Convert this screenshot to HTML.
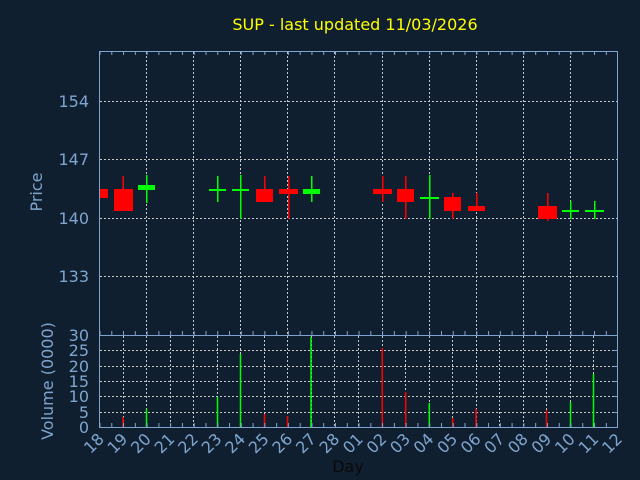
<!DOCTYPE html>
<html><head><meta charset="utf-8"><style>
html,body{margin:0;padding:0;background:#101f30;width:640px;height:480px;overflow:hidden;}
svg{display:block;}
text{font-family:"DejaVu Sans","Liberation Sans",sans-serif;}
</style></head><body>
<svg width="640" height="480" viewBox="0 0 640 480" xmlns="http://www.w3.org/2000/svg">
<defs>
<pattern id="tkT" x="99.5" y="0" width="11.775" height="480" patternUnits="userSpaceOnUse"><line x1="0.5" y1="51" x2="0.5" y2="55" stroke="#7fa5cf" stroke-width="1"/></pattern>
<pattern id="tkM" x="99.5" y="0" width="11.775" height="480" patternUnits="userSpaceOnUse"><line x1="0.5" y1="331" x2="0.5" y2="335" stroke="#7fa5cf" stroke-width="1"/></pattern>
<pattern id="tkB" x="99.5" y="0" width="11.775" height="480" patternUnits="userSpaceOnUse"><line x1="0.5" y1="423" x2="0.5" y2="427" stroke="#7fa5cf" stroke-width="1"/></pattern>
</defs>
<rect width="640" height="480" fill="#101f30"/>
<text x="355" y="30" fill="#ffff00" font-size="16" text-anchor="middle">SUP - last updated 11/03/2026</text>

<g stroke="#c8c8c8" stroke-width="1" stroke-dasharray="2,2" fill="none">
<line x1="100" y1="101.5" x2="617" y2="101.5"/>
<line x1="100" y1="159.5" x2="617" y2="159.5"/>
<line x1="100" y1="218.5" x2="617" y2="218.5"/>
<line x1="100" y1="276.5" x2="617" y2="276.5"/>
<line x1="146.5" y1="52" x2="146.5" y2="335"/>
<line x1="193.5" y1="52" x2="193.5" y2="335"/>
<line x1="240.5" y1="52" x2="240.5" y2="335"/>
<line x1="287.5" y1="52" x2="287.5" y2="335"/>
<line x1="334.5" y1="52" x2="334.5" y2="335"/>
<line x1="382.5" y1="52" x2="382.5" y2="335"/>
<line x1="429.5" y1="52" x2="429.5" y2="335"/>
<line x1="476.5" y1="52" x2="476.5" y2="335"/>
<line x1="523.5" y1="52" x2="523.5" y2="335"/>
<line x1="570.5" y1="52" x2="570.5" y2="335"/>
<line x1="100" y1="350.5" x2="617" y2="350.5"/>
<line x1="100" y1="366.5" x2="617" y2="366.5"/>
<line x1="100" y1="381.5" x2="617" y2="381.5"/>
<line x1="100" y1="396.5" x2="617" y2="396.5"/>
<line x1="100" y1="412.5" x2="617" y2="412.5"/>
<line x1="123.5" y1="336" x2="123.5" y2="427"/>
<line x1="146.5" y1="336" x2="146.5" y2="427"/>
<line x1="170.5" y1="336" x2="170.5" y2="427"/>
<line x1="193.5" y1="336" x2="193.5" y2="427"/>
<line x1="217.5" y1="336" x2="217.5" y2="427"/>
<line x1="240.5" y1="336" x2="240.5" y2="427"/>
<line x1="264.5" y1="336" x2="264.5" y2="427"/>
<line x1="287.5" y1="336" x2="287.5" y2="427"/>
<line x1="311.5" y1="336" x2="311.5" y2="427"/>
<line x1="334.5" y1="336" x2="334.5" y2="427"/>
<line x1="358.5" y1="336" x2="358.5" y2="427"/>
<line x1="382.5" y1="336" x2="382.5" y2="427"/>
<line x1="405.5" y1="336" x2="405.5" y2="427"/>
<line x1="429.5" y1="336" x2="429.5" y2="427"/>
<line x1="452.5" y1="336" x2="452.5" y2="427"/>
<line x1="476.5" y1="336" x2="476.5" y2="427"/>
<line x1="499.5" y1="336" x2="499.5" y2="427"/>
<line x1="523.5" y1="336" x2="523.5" y2="427"/>
<line x1="546.5" y1="336" x2="546.5" y2="427"/>
<line x1="570.5" y1="336" x2="570.5" y2="427"/>
<line x1="593.5" y1="336" x2="593.5" y2="427"/>
</g>

<g>
<rect x="100" y="189" width="8" height="9" fill="#ff0000"/>
<rect x="122.5" y="176" width="1.5" height="35" fill="#ff0000"/>
<rect x="114" y="189" width="19" height="22" fill="#ff0000"/>
<rect x="146" y="175" width="1.5" height="28" fill="#00ff00"/>
<rect x="138" y="185" width="17" height="5" fill="#00ff00"/>
<rect x="217" y="176" width="1.5" height="26" fill="#00ff00"/>
<rect x="209" y="189" width="17" height="2" fill="#00ff00"/>
<rect x="240" y="175" width="1.5" height="44" fill="#00ff00"/>
<rect x="232" y="189" width="17" height="2" fill="#00ff00"/>
<rect x="264" y="176" width="1.5" height="26" fill="#ff0000"/>
<rect x="256" y="189" width="17" height="13" fill="#ff0000"/>
<rect x="288" y="176" width="1.5" height="43" fill="#ff0000"/>
<rect x="279" y="189" width="19" height="5" fill="#ff0000"/>
<rect x="311" y="176" width="1.5" height="26" fill="#00ff00"/>
<rect x="303" y="189" width="17" height="5" fill="#00ff00"/>
<rect x="382" y="176" width="1.5" height="26" fill="#ff0000"/>
<rect x="373" y="189" width="19" height="5" fill="#ff0000"/>
<rect x="405" y="176" width="1.5" height="43" fill="#ff0000"/>
<rect x="397" y="189" width="17" height="13" fill="#ff0000"/>
<rect x="429" y="175" width="1.5" height="44" fill="#00ff00"/>
<rect x="420" y="197" width="19" height="2" fill="#00ff00"/>
<rect x="452" y="193" width="1.5" height="26" fill="#ff0000"/>
<rect x="444" y="197" width="17" height="14" fill="#ff0000"/>
<rect x="476" y="193" width="1.5" height="18" fill="#ff0000"/>
<rect x="468" y="206" width="17" height="5" fill="#ff0000"/>
<rect x="547" y="193" width="1.5" height="28" fill="#ff0000"/>
<rect x="538" y="206" width="19" height="13" fill="#ff0000"/>
<rect x="570" y="201" width="1.5" height="18" fill="#00ff00"/>
<rect x="562" y="210" width="17" height="2" fill="#00ff00"/>
<rect x="594" y="201" width="1.5" height="18" fill="#00ff00"/>
<rect x="585" y="210" width="19" height="2" fill="#00ff00"/>
</g>

<g stroke-width="1.5">
<line x1="123" y1="417" x2="123" y2="427" stroke="#ff0000"/>
<line x1="146.5" y1="409" x2="146.5" y2="427" stroke="#00ff00"/>
<line x1="217.5" y1="397" x2="217.5" y2="427" stroke="#00ff00"/>
<line x1="240.5" y1="354" x2="240.5" y2="427" stroke="#00ff00"/>
<line x1="264.5" y1="414" x2="264.5" y2="427" stroke="#ff0000"/>
<line x1="287.5" y1="416" x2="287.5" y2="427" stroke="#ff0000"/>
<line x1="311" y1="337" x2="311" y2="427" stroke="#00ff00"/>
<line x1="382.3" y1="348" x2="382.3" y2="427" stroke="#ff0000"/>
<line x1="405.7" y1="392" x2="405.7" y2="427" stroke="#ff0000"/>
<line x1="429.3" y1="403" x2="429.3" y2="427" stroke="#00ff00"/>
<line x1="452.6" y1="418" x2="452.6" y2="427" stroke="#ff0000"/>
<line x1="476" y1="409" x2="476" y2="427" stroke="#ff0000"/>
<line x1="546.5" y1="410" x2="546.5" y2="427" stroke="#ff0000"/>
<line x1="570.5" y1="402" x2="570.5" y2="427" stroke="#00ff00"/>
<line x1="593.5" y1="374" x2="593.5" y2="427" stroke="#00ff00"/>
</g>

<rect x="99" y="51" width="519" height="4" fill="url(#tkT)"/>
<rect x="99" y="331" width="519" height="4" fill="url(#tkM)"/>
<rect x="99" y="423" width="519" height="4" fill="url(#tkB)"/>
<g stroke="#7fa5cf" stroke-width="1" fill="none">
<rect x="99.5" y="51.5" width="518" height="284"/>
<rect x="99.5" y="335.5" width="518" height="92"/>
<line x1="613" y1="350.5" x2="617" y2="350.5"/><line x1="613" y1="366.5" x2="617" y2="366.5"/>
<line x1="613" y1="381.5" x2="617" y2="381.5"/><line x1="613" y1="396.5" x2="617" y2="396.5"/>
<line x1="613" y1="412.5" x2="617" y2="412.5"/>
</g>

<g fill="#7fa5cf" font-size="16" text-anchor="end">
<text x="89" y="107">154</text>
<text x="89" y="165">147</text>
<text x="89" y="224">140</text>
<text x="89" y="282">133</text>
<text x="89" y="341">30</text>
<text x="89" y="356">25</text>
<text x="89" y="372">20</text>
<text x="89" y="387">15</text>
<text x="89" y="402">10</text>
<text x="89" y="418">5</text>
<text x="89" y="433">0</text>
</g>
<text transform="translate(42,192) rotate(-90)" fill="#7fa5cf" font-size="16" text-anchor="middle">Price</text>
<text transform="translate(53,381) rotate(-90)" fill="#7fa5cf" font-size="16" text-anchor="middle">Volume (0000)</text>

<g fill="#7fa5cf" font-size="16" text-anchor="end">
<text transform="translate(105,440) rotate(-45)">18</text>
<text transform="translate(128.5,440) rotate(-45)">19</text>
<text transform="translate(152,440) rotate(-45)">20</text>
<text transform="translate(175.6,440) rotate(-45)">21</text>
<text transform="translate(199.2,440) rotate(-45)">22</text>
<text transform="translate(222.7,440) rotate(-45)">23</text>
<text transform="translate(246.3,440) rotate(-45)">24</text>
<text transform="translate(269.8,440) rotate(-45)">25</text>
<text transform="translate(293.4,440) rotate(-45)">26</text>
<text transform="translate(317,440) rotate(-45)">27</text>
<text transform="translate(340.5,440) rotate(-45)">28</text>
<text transform="translate(364,440) rotate(-45)">01</text>
<text transform="translate(387.6,440) rotate(-45)">02</text>
<text transform="translate(411.2,440) rotate(-45)">03</text>
<text transform="translate(434.7,440) rotate(-45)">04</text>
<text transform="translate(458.3,440) rotate(-45)">05</text>
<text transform="translate(481.8,440) rotate(-45)">06</text>
<text transform="translate(505.4,440) rotate(-45)">07</text>
<text transform="translate(529,440) rotate(-45)">08</text>
<text transform="translate(552.5,440) rotate(-45)">09</text>
<text transform="translate(576,440) rotate(-45)">10</text>
<text transform="translate(599.6,440) rotate(-45)">11</text>
<text transform="translate(623.2,440) rotate(-45)">12</text>
</g>
<text x="348" y="472" fill="#0a0a0a" font-size="16" text-anchor="middle">Day</text>
</svg>
</body></html>
